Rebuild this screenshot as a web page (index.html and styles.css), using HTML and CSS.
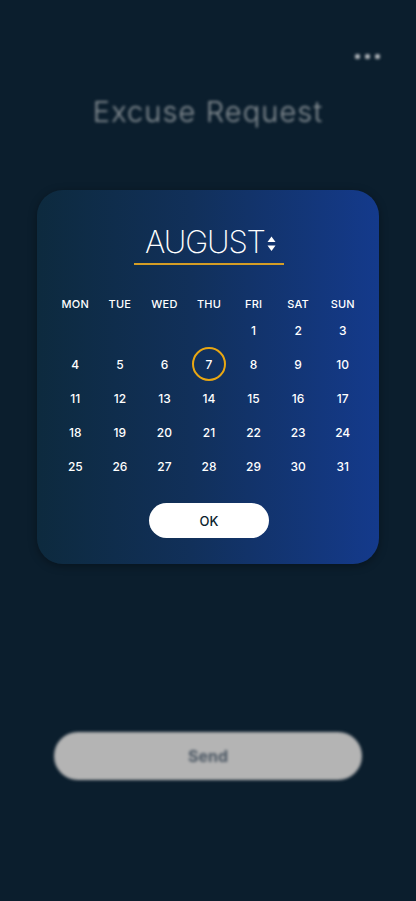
FILE: index.html
```
<!DOCTYPE html>
<html lang="en">
<head>
<meta charset="utf-8">
<title>Excuse Request</title>
<link rel="stylesheet" href="styles.css">
</head>
<body>
<div class="screen">
  <div class="topbar blurred">
    <span class="dot"></span><span class="dot"></span><span class="dot"></span>
  </div>
  <h1 class="title blurred">Excuse Request</h1>

  <div class="card">
    <div class="month-row">
      <div class="month">
        <span class="month-name">AUGUST</span>
        <svg class="arrows" width="9" height="16" viewBox="0 0 9 16"><path d="M4.5 0.5 L8.5 6 L0.5 6 Z" fill="#fff"/><path d="M0.5 9.5 L8.5 9.5 L4.5 15 Z" fill="#fff"/></svg>
      </div>
    </div>
    <div class="grid">
      <div class="wd">MON</div><div class="wd">TUE</div><div class="wd">WED</div><div class="wd">THU</div><div class="wd">FRI</div><div class="wd">SAT</div><div class="wd">SUN</div>
      <div class="d"></div><div class="d"></div><div class="d"></div><div class="d"></div><div class="d">1</div><div class="d">2</div><div class="d">3</div>
      <div class="d">4</div><div class="d">5</div><div class="d">6</div><div class="d"><span class="sel">7</span></div><div class="d">8</div><div class="d">9</div><div class="d">10</div>
      <div class="d">11</div><div class="d">12</div><div class="d">13</div><div class="d">14</div><div class="d">15</div><div class="d">16</div><div class="d">17</div>
      <div class="d">18</div><div class="d">19</div><div class="d">20</div><div class="d">21</div><div class="d">22</div><div class="d">23</div><div class="d">24</div>
      <div class="d">25</div><div class="d">26</div><div class="d">27</div><div class="d">28</div><div class="d">29</div><div class="d">30</div><div class="d">31</div>
    </div>
    <div class="ok-row"><button class="ok">OK</button></div>
  </div>

  <div class="send-row blurred"><button class="send">Send</button></div>
</div>
</body>
</html>
```
FILE: styles.css
```
html, body {
  margin: 0;
  padding: 0;
  background: #0b1e2d;
}
body {
  font-family: "Inter", "Open Sans", sans-serif;
  color: #fff;
}
.screen {
  width: 416px;
  height: 901px;
  display: flex;
  flex-direction: column;
  overflow: hidden;
}
.blurred {
  filter: blur(1.4px);
}
.topbar {
  display: flex;
  justify-content: flex-end;
  gap: 5px;
  padding: 54px 36px 0 0;
  height: 5px;
}
.dot {
  width: 5px;
  height: 5px;
  border-radius: 50%;
  background: #c3c7cb;
}
.title {
  margin: 36px 0 0;
  text-align: center;
  font-size: 29px;
  line-height: 34px;
  font-weight: 300;
  color: #8b9398;
  letter-spacing: 1.1px;
}
.card {
  margin: 61px 0 0 37px;
  width: 342px;
  box-sizing: border-box;
  padding: 33px 14px 26px 16px;
  border-radius: 26px;
  background: linear-gradient(90deg, #0d2a3e 0%, #11305a 45%, #143a8c 100%);
  box-shadow: 0 2px 8px rgba(0, 0, 0, 0.35);
}
.month-row {
  display: flex;
  justify-content: center;
}
.month {
  width: 150px;
  height: 42px;
  box-sizing: border-box;
  border-bottom: 2px solid #d49d25;
  display: flex;
  justify-content: center;
  align-items: flex-start;
  gap: 2px;
  padding-left: 3px;
}
.month-name {
  font-size: 31px;
  line-height: 38px;
  font-weight: 200;
  letter-spacing: -1.1px;
}
.arrows {
  margin-top: 13px;
}
.grid {
  margin-top: 31px;
  display: grid;
  grid-template-columns: repeat(7, 1fr);
}
.wd {
  text-align: center;
  font-size: 11px;
  line-height: 16px;
  font-weight: 500;
  letter-spacing: 0.2px;
  height: 17px;
}
.d {
  height: 34px;
  display: flex;
  align-items: center;
  justify-content: center;
  font-size: 12px;
  font-weight: 500;
}
.sel {
  width: 30px;
  height: 30px;
  border: 2px solid #e9a712;
  border-radius: 50%;
  display: flex;
  align-items: center;
  justify-content: center;
}
.ok-row {
  display: flex;
  justify-content: center;
  margin-top: 20px;
}
.ok {
  width: 120px;
  height: 35px;
  border: none;
  border-radius: 18px;
  background: #fff;
  color: #0b1e2d;
  font-family: "Inter", "Open Sans", sans-serif;
  font-size: 13px;
  font-weight: 500;
}
.send-row {
  margin-top: 168px;
  display: flex;
  justify-content: center;
}
.send {
  width: 308px;
  height: 48px;
  border: none;
  border-radius: 24px;
  background: #b4b4b4;
  color: #4b5763;
  font-family: "Inter", "Open Sans", sans-serif;
  font-size: 16px;
  font-weight: 700;
}
```
